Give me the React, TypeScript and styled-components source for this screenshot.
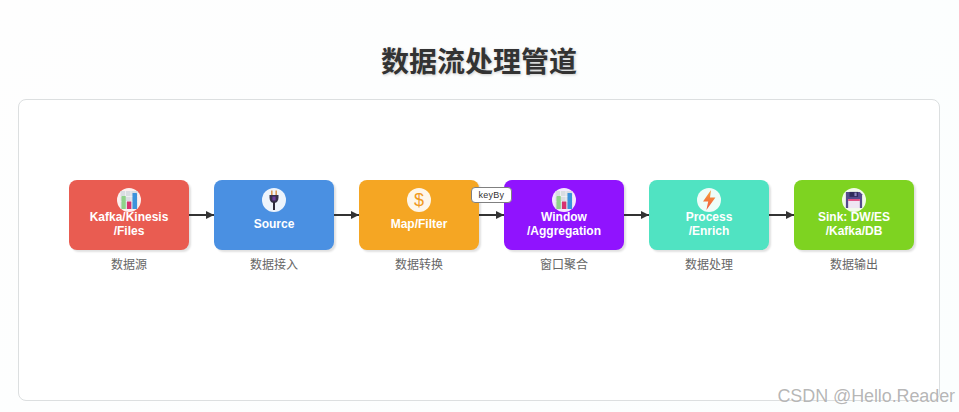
import React from "react";
import styled, { createGlobalStyle } from "styled-components";

const Global = createGlobalStyle`
  html, body { margin: 0; padding: 0; background: #fdfefe; }
  body { font-family: "Liberation Sans", "Noto Sans CJK SC", sans-serif; overflow: hidden; }
`;

const Page = styled.div`
  position: relative;
  width: 959px;
  height: 412px;
  box-sizing: border-box;
  padding: 0 19px 11px 18px;
  display: flex;
  flex-direction: column;
  background: linear-gradient(135deg, #fefefe 0%, #fbfefe 100%);
  overflow: hidden;
`;

const Title = styled.h1`
  margin: 0;
  height: 99px;
  box-sizing: border-box;
  padding-top: 40px;
  text-align: center;
  font-family: "Noto Sans CJK SC", sans-serif;
  font-size: 28px;
  line-height: 40px;
  font-weight: 700;
  color: #333;
  text-shadow: 1px 1px 3px rgba(0, 0, 0, 0.2);
`;

const Panel = styled.div`
  flex: 1;
  box-sizing: border-box;
  border: 1px solid #dcdfe0;
  border-radius: 8px;
  background: #fff;
  padding: 80px 0 0 50px;
`;

const Flow = styled.div`
  display: flex;
  align-items: flex-start;
`;

const Stage = styled.div`
  width: 120px;
  flex: none;
  display: flex;
  flex-direction: column;
  align-items: center;
`;

const Node = styled.div<{ $bg: string }>`
  position: relative;
  width: 120px;
  height: 70px;
  border-radius: 8px;
  background: ${(p) => p.$bg};
  box-shadow: 2px 2px 2px rgba(0, 0, 0, 0.12);
  display: flex;
  align-items: center;
  justify-content: center;
  text-align: center;
  color: #fff;
  font-size: 12px;
  font-weight: 700;
  line-height: 14px;
`;

const NodeText = styled.div<{ $two: boolean }>`
  position: relative;
  margin-top: ${(p) => (p.$two ? 18 : 17)}px;
  white-space: pre-line;
`;

const IconBadge = styled.div`
  position: absolute;
  top: 8px;
  left: 48px;
  width: 24px;
  height: 24px;
  border-radius: 50%;
  background: rgba(255, 255, 255, 0.9);
  display: flex;
  align-items: center;
  justify-content: center;
  color: #f19a1e;
  font-size: 18px;
  font-weight: 400;
  line-height: 24px;
`;

const Caption = styled.div`
  margin-top: 6px;
  font-family: "Noto Sans CJK SC", sans-serif;
  font-size: 12px;
  line-height: 16px;
  color: #666;
`;

const Arrow = styled.div`
  position: relative;
  width: 25px;
  height: 70px;
  flex: none;
  &::before {
    content: "";
    position: absolute;
    left: 0;
    right: 0;
    top: 34px;
    height: 2px;
    background: #333;
  }
  &::after {
    content: "";
    position: absolute;
    right: 0;
    top: 31px;
    border-left: 8px solid #333;
    border-top: 4px solid transparent;
    border-bottom: 4px solid transparent;
  }
`;

const EdgeLabel = styled.div`
  position: absolute;
  z-index: 2;
  top: 7px;
  left: -8px;
  width: 41px;
  height: 16px;
  box-sizing: border-box;
  border: 1px solid #808080;
  border-radius: 4px;
  background: #fff;
  color: #333;
  font-size: 9px;
  line-height: 14px;
  text-align: center;
  letter-spacing: 0.25px;
`;

const Watermark = styled.div`
  position: absolute;
  right: 4px;
  bottom: 6px;
  font-family: "Liberation Sans", sans-serif;
  font-size: 18px;
  line-height: 20px;
  letter-spacing: -0.1px;
  color: rgba(120, 120, 120, 0.55);
  text-shadow: 0 0 1px rgba(255, 255, 255, 0.9);
`;

const Chart = () => (
  <svg width="20" height="20" viewBox="0 0 20 20">
    <rect x="1.5" y="1" width="17" height="18" fill="#d9dde2" />
    <path d="M1.5 6.5h17M1.5 11.5h17M6.5 1v18M12 1v18" stroke="#f3f4f6" strokeWidth="0.8" />
    <rect x="2.5" y="6" width="4.3" height="13" rx="0.6" fill="#8fd28a" />
    <rect x="8" y="11.5" width="4.3" height="7.5" fill="#d8326f" />
    <rect x="13.5" y="3" width="4.5" height="16" rx="0.6" fill="#3d93dc" />
  </svg>
);

const Plug = () => (
  <svg width="20" height="22" viewBox="0 0 20 22">
    <path d="M7.8 1.5v5M12.2 1.5v5" stroke="#d99a55" strokeWidth="1.6" />
    <path d="M5.5 6h9v2.5c0 3-1.4 4.8-3 5.3H8.5C6.9 13.3 5.5 11.5 5.5 8.5z" fill="#35304a" />
    <path d="M8.4 7.5h3.2v4H8.4z" fill="#6d3f9e" />
    <path d="M10 13v8" stroke="#2c2a3a" strokeWidth="2" />
  </svg>
);

const Bolt = () => (
  <svg width="20" height="22" viewBox="0 0 20 22">
    <defs>
      <linearGradient id="bolt" x1="0" y1="0" x2="0" y2="1">
        <stop offset="0" stopColor="#f7a23b" />
        <stop offset="1" stopColor="#f0563f" />
      </linearGradient>
    </defs>
    <path d="M12 1 4 12.5h5.2L7.4 21l9-12.4h-5.4z" fill="url(#bolt)" />
  </svg>
);

const Floppy = () => (
  <svg width="18" height="18" viewBox="0 0 20 20">
    <path d="M1 1h15.5L19 3.5V19H1z" fill="#544a8c" />
    <rect x="5" y="1" width="9.5" height="5.5" fill="#2f2c5a" />
    <rect x="10.5" y="1.8" width="2.4" height="3.8" fill="#8f88c2" />
    <rect x="3.5" y="9" width="13" height="10" fill="#efe6f2" />
    <rect x="3.5" y="9" width="13" height="2" fill="#e0457b" />
  </svg>
);

const Dollar = () => <span>$</span>;

const stages: {
  text: string;
  caption: string;
  bg: string;
  icon: React.ReactNode;
}[] = [
  { text: "Kafka/Kinesis\n/Files", caption: "数据源", bg: "#e95c51", icon: <Chart /> },
  { text: "Source", caption: "数据接入", bg: "#4a90e2", icon: <Plug /> },
  { text: "Map/Filter", caption: "数据转换", bg: "#f5a623", icon: <Dollar /> },
  { text: "Window\n/Aggregation", caption: "窗口聚合", bg: "#9013fe", icon: <Chart /> },
  { text: "Process\n/Enrich", caption: "数据处理", bg: "#50e3c2", icon: <Bolt /> },
  { text: "Sink: DW/ES\n/Kafka/DB", caption: "数据输出", bg: "#7ed321", icon: <Floppy /> },
];

export default function App() {
  return (
    <Page>
      <Global />
      <Title>数据流处理管道</Title>
      <Panel>
        <Flow>
          {stages.map((s, i) => (
            <React.Fragment key={s.caption}>
              {i > 0 && (
                <Arrow>{i === 3 && <EdgeLabel>keyBy</EdgeLabel>}</Arrow>
              )}
              <Stage>
                <Node $bg={s.bg}>
                  <IconBadge>{s.icon}</IconBadge>
                  <NodeText $two={s.text.includes("\n")}>{s.text}</NodeText>
                </Node>
                <Caption>{s.caption}</Caption>
              </Stage>
            </React.Fragment>
          ))}
        </Flow>
      </Panel>
      <Watermark>CSDN @Hello.Reader</Watermark>
    </Page>
  );
}
